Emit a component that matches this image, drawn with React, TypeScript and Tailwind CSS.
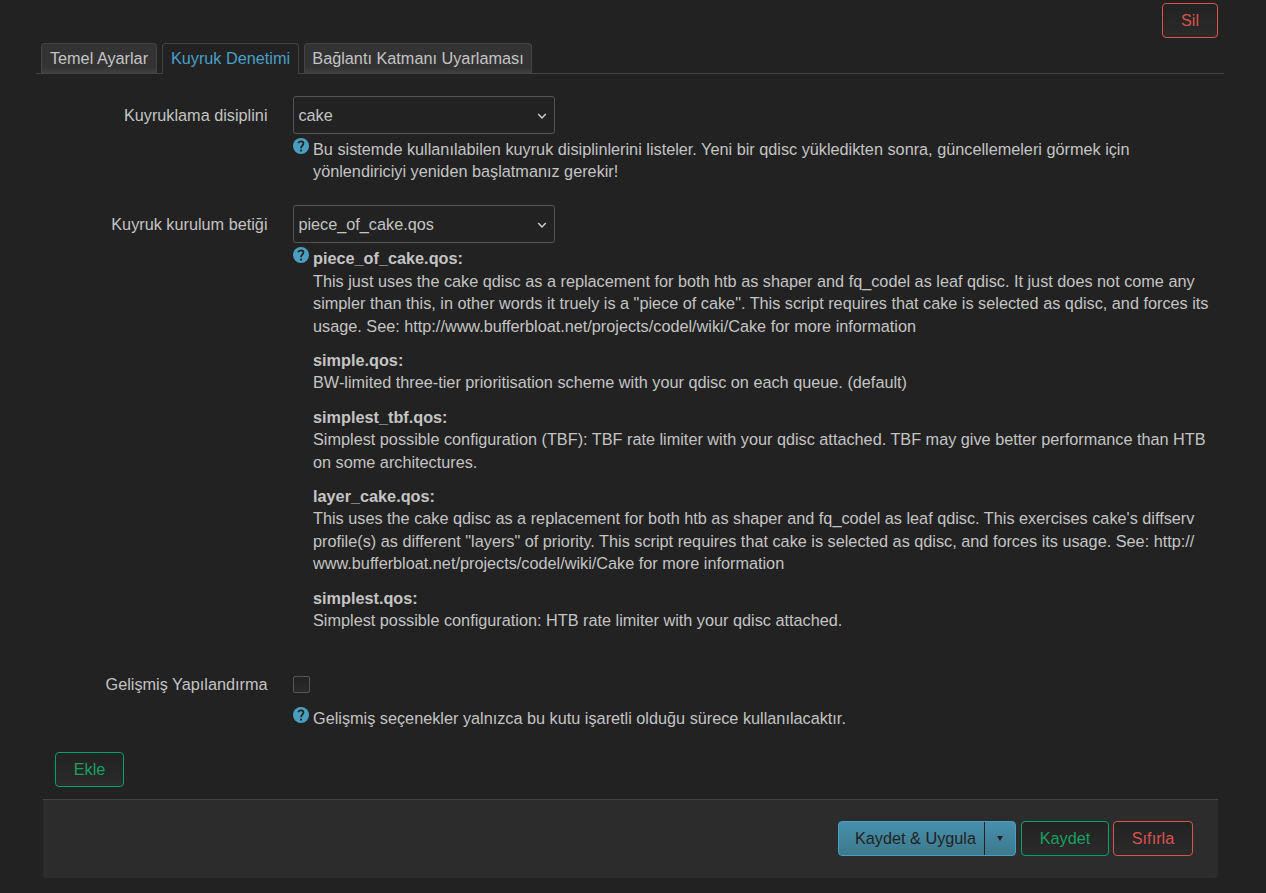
import React from 'react';

interface HelpProps {
    className?: string;
    children: React.ReactNode;
}

interface RowProps {
    label: string;
    className?: string;
    children: React.ReactNode;
}

interface Script {
    name: string;
    lines: string[];
}

const scripts: Script[] = [
    {
        name: 'piece_of_cake.qos:',
        lines: [
            'This just uses the cake qdisc as a replacement for both htb as shaper and fq_codel as leaf qdisc. It just does not come any',
            'simpler than this, in other words it truely is a "piece of cake". This script requires that cake is selected as qdisc, and forces its',
            'usage. See: http://www.bufferbloat.net/projects/codel/wiki/Cake for more information',
        ],
    },
    {
        name: 'simple.qos:',
        lines: ['BW-limited three-tier prioritisation scheme with your qdisc on each queue. (default)'],
    },
    {
        name: 'simplest_tbf.qos:',
        lines: [
            'Simplest possible configuration (TBF): TBF rate limiter with your qdisc attached. TBF may give better performance than HTB',
            'on some architectures.',
        ],
    },
    {
        name: 'layer_cake.qos:',
        lines: [
            "This uses the cake qdisc as a replacement for both htb as shaper and fq_codel as leaf qdisc. This exercises cake's diffserv",
            'profile(s) as different "layers" of priority. This script requires that cake is selected as qdisc, and forces its usage. See: http://',
            'www.bufferbloat.net/projects/codel/wiki/Cake for more information',
        ],
    },
    {
        name: 'simplest.qos:',
        lines: ['Simplest possible configuration: HTB rate limiter with your qdisc attached.'],
    },
];

const buttonColors: { [key: string]: string } = {
    green: 'border-[#00a36c] text-[#1a9f63]',
    red: 'border-[#d9534f] text-[#d9534f]',
};

const Button: React.FC<{ color: 'green' | 'red'; className?: string; children: React.ReactNode }> = ({ color, className = '', children }) => (
    <button className={`h-[35px] rounded-[4px] border bg-linear-to-b from-[#222] to-[#2b2b2b] text-center leading-[33px] ${buttonColors[color]} ${className}`}>
        {children}
    </button>
);

const Row: React.FC<RowProps> = ({ label, className = '', children }) => (
    <div className={`flex ${className}`}>
        <label className="w-[267.5px] shrink-0 text-right leading-[38px]">{label}</label>
        <div className="ml-[25.5px]">{children}</div>
    </div>
);

const Select: React.FC<{ value: string }> = ({ value }) => (
    <div className="flex h-[38px] w-[262px] items-center justify-between rounded-[3px] border border-[#555] pl-[4.4px] pr-[7px]">
        <span>{value}</span>
        <svg className="mt-[2px] h-[10px] w-[10px]" viewBox="0 0 10 10" fill="none" stroke="#ccc" strokeWidth="1.5">
            <path d="M1.2 3 L5 7 L8.8 3" />
        </svg>
    </div>
);

const Help: React.FC<HelpProps> = ({ className = '', children }) => (
    <div className={`flex gap-[4px] whitespace-nowrap leading-[22.5px] ${className}`}>
        <svg className="h-4 w-4 shrink-0" viewBox="0 0 16 16">
            <circle cx="8" cy="8" r="8" fill="#4a9fc0" />
            <path d="M5.3 5.2 C5.9 2.6 10.5 2.7 10.5 5.6 C10.5 7.6 8 7.6 8 10.2" fill="none" stroke="#222" strokeWidth="1.7" />
            <rect x="7.1" y="11.6" width="1.9" height="1.9" fill="#222" />
        </svg>
        <div>{children}</div>
    </div>
);

const App: React.FC = () => {
    return (
        <div className="h-[893px] w-[1266px] overflow-hidden bg-[#222] pt-[3px] font-['Liberation_Sans',Arial,sans-serif] text-[16.25px] text-[#c4c4c4]">
            <div className="flex justify-end pr-12">
                <Button color="red" className="w-14">Sil</Button>
            </div>

            {/* Sekmeler */}
            <div className="ml-[36px] mt-[5px] flex h-[31px] w-[1188px] gap-[5px] whitespace-nowrap border-b border-[#444] pl-[5px] leading-[29px]">
                <div className="h-[30px] w-[116px] rounded-t-[4px] border border-b-0 border-[#444] bg-linear-to-b from-[#333] from-80% to-[#404040] text-center">Temel Ayarlar</div>
                <div className="h-[31px] w-[137px] rounded-t-[4px] border border-b-0 border-[#444] bg-[#222] text-center text-[#4a9fc7]">Kuyruk Denetimi</div>
                <div className="h-[30px] w-[228px] rounded-t-[4px] border border-b-0 border-[#444] bg-linear-to-b from-[#333] from-80% to-[#404040] text-center">Bağlantı Katmanı Uyarlaması</div>
            </div>

            <Row label="Kuyruklama disiplini" className="mt-[22px] h-[109px]">
                <Select value="cake" />
                <Help className="mt-[4px]">
                    <p>Bu sistemde kullanılabilen kuyruk disiplinlerini listeler. Yeni bir qdisc yükledikten sonra, güncellemeleri görmek için</p>
                    <p className="-mt-px">yönlendiriciyi yeniden başlatmanız gerekir!</p>
                </Help>
            </Row>

            <Row label="Kuyruk kurulum betiği" className="h-[460px]">
                <Select value="piece_of_cake.qos" />
                <Help className="mt-[4px]">
                    <div className="flex flex-col gap-[11.75px]">
                        {scripts.map((script) => (
                            <div key={script.name}>
                                <strong className="block">{script.name}</strong>
                                {script.lines.map((line) => (
                                    <p key={line}>{line}</p>
                                ))}
                            </div>
                        ))}
                    </div>
                </Help>
            </Row>

            <Row label="Gelişmiş Yapılandırma" className="h-[87px]">
                <div className="mt-[11px] h-[17px] w-[17px] rounded-[2px] border border-[#555] bg-linear-to-b from-[#222] to-[#2b2b2b]" />
                <Help className="mt-[14px]">
                    <p>Gelişmiş seçenekler yalnızca bu kutu işaretli olduğu sürece kullanılacaktır.</p>
                </Help>
            </Row>

            <Button color="green" className="ml-[55px] block w-[69px]">Ekle</Button>

            {/* Sayfa işlemleri */}
            <div className="ml-[43px] mt-3 flex h-[79px] w-[1175px] justify-end rounded-b-[3px] border-t border-[#444] bg-[#2c2c2c] pr-[25px] pt-[21px]">
                <div className="mr-[5px] flex h-[35px] w-[178px] rounded-[4px] border border-[#4a9fc0] bg-linear-to-b from-[#468fab] to-[#3d7a8d] text-center leading-[33px] text-[#222]">
                    <div className="w-[146px] border-r border-[#222] pl-[8px]">Kaydet &amp; Uygula</div>
                    <div className="flex flex-1 items-center justify-center">
                        <svg className="h-[5px] w-[6px]" viewBox="0 0 6 5">
                            <path d="M0 0 H6 L3 5 Z" fill="#222" />
                        </svg>
                    </div>
                </div>
                <Button color="green" className="mr-[4px] w-[88px]">Kaydet</Button>
                <Button color="red" className="w-20">Sıfırla</Button>
            </div>
        </div>
    );
};

export default App;
